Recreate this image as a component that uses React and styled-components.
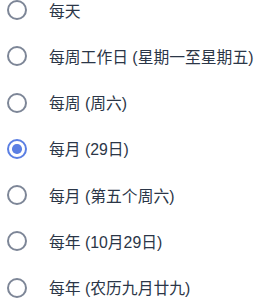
import styled, { createGlobalStyle } from "styled-components";

const GlobalStyle = createGlobalStyle`
    html, body {
        margin: 0;
        padding: 0;
        background: #ffffff;
        overflow: hidden;
    }
    body {
        font-family: "Liberation Sans", "Noto Sans CJK SC", sans-serif;
    }
`

const List = styled.div`
    display: flex;
    flex-direction: column;
    margin-top: -13px;
`

const Row = styled.label`
    display: flex;
    align-items: center;
    height: 46.25px;
    padding-left: 7px;
    gap: 22px;
    cursor: pointer;
`

const Radio = styled.span`
    box-sizing: border-box;
    width: 20px;
    height: 20px;
    border-radius: 50%;
    border: 2px solid ${p => p.$checked ? '#5b7fe3' : '#7d8697'};
    display: flex;
    align-items: center;
    justify-content: center;
    flex-shrink: 0;
`

const Dot = styled.span`
    width: 9.5px;
    height: 9.5px;
    border-radius: 50%;
    background: #5b7fe3;
`

const Label = styled.span`
    font-size: 15.8px;
    color: #2b3647;
    white-space: nowrap;
`

const options = [
    '每天',
    '每周工作日 (星期一至星期五)',
    '每周 (周六)',
    '每月 (29日)',
    '每月 (第五个周六)',
    '每年 (10月29日)',
    '每年 (农历九月廿九)',
]

export default function App(){
    const selected = 3
    return(
        <>
            <GlobalStyle/>
            <List>
                {options.map((text, i) => (
                    <Row key={text}>
                        <Radio $checked={i === selected}>
                            {i === selected ? <Dot/> : null}
                        </Radio>
                        <Label>{text}</Label>
                    </Row>
                ))}
            </List>
        </>
    )
}
